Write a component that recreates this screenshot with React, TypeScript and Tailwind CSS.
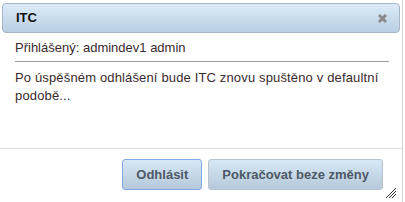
function ResizeGrip() {
  return (
    <svg width="12" height="12" viewBox="0 0 12 12" className="absolute right-[5px] bottom-[3px]">
      <path d="M1 11 L11 1 M4 11 L11 4 M7 11 L11 7" stroke="#333" strokeWidth="1" />
    </svg>
  );
}

function CloseIcon() {
  return (
    <svg width="11" height="11" viewBox="0 0 11 11">
      <path d="M2 2 L9 9 M9 2 L2 9" stroke="#8a8a8a" strokeWidth="3" strokeLinecap="butt" />
    </svg>
  );
}

export default function App() {
  return (
    <div
      className="relative w-[405px] h-[202px] bg-white overflow-hidden"
      style={{ fontFamily: '"Liberation Sans", Arial, sans-serif' }}
    >
      <div className="relative w-[403px] h-[202px] border-r border-[#d4d4d4] flex flex-col">
        {/* Title bar */}
        <div className="mx-[2px] mt-[3px] h-[30px] rounded-[4px] border border-[#a7b6c6] bg-gradient-to-b from-[#dcebf8] to-[#b9cfe3] flex items-center justify-between pl-[13px] pr-[11px]">
          <span className="text-[13px] font-bold text-[#111]">ITC</span>
          <CloseIcon />
        </div>

        {/* Content */}
        <div className="px-[15px] pt-[7px] text-[13px] text-[#3b2a2e]">
          <p className="leading-[16px]">Přihlášený: admindev1 admin</p>
          <div className="mt-[5px] h-[2px] border-t border-[#9a9a9a] w-[374px]" />
          <p className="mt-[6px] leading-[18px] w-[374px] tracking-[0.15px]">
            Po úspěšném odhlášení bude ITC znovu spuštěno v defaultní podobě...
          </p>
        </div>

        {/* Footer */}
        <div className="mt-auto border-t border-[#dddddd] h-[54px] flex justify-end items-start pt-[10px] pr-[19px] gap-[6px]">
          <button className="h-[31px] px-[13px] rounded-[3px] border border-[#7fa8e4] bg-gradient-to-b from-[#d7e8f7] to-[#b5c9da] text-[13px] font-bold text-[#4e5966]">
            Odhlásit
          </button>
          <button className="h-[31px] px-[13px] rounded-[3px] border border-[#b6c3cf] bg-gradient-to-b from-[#d7e8f7] to-[#b5c9da] text-[13px] font-bold text-[#4e5966]">
            Pokračovat beze změny
          </button>
        </div>
        <ResizeGrip />
      </div>
    </div>
  );
}
